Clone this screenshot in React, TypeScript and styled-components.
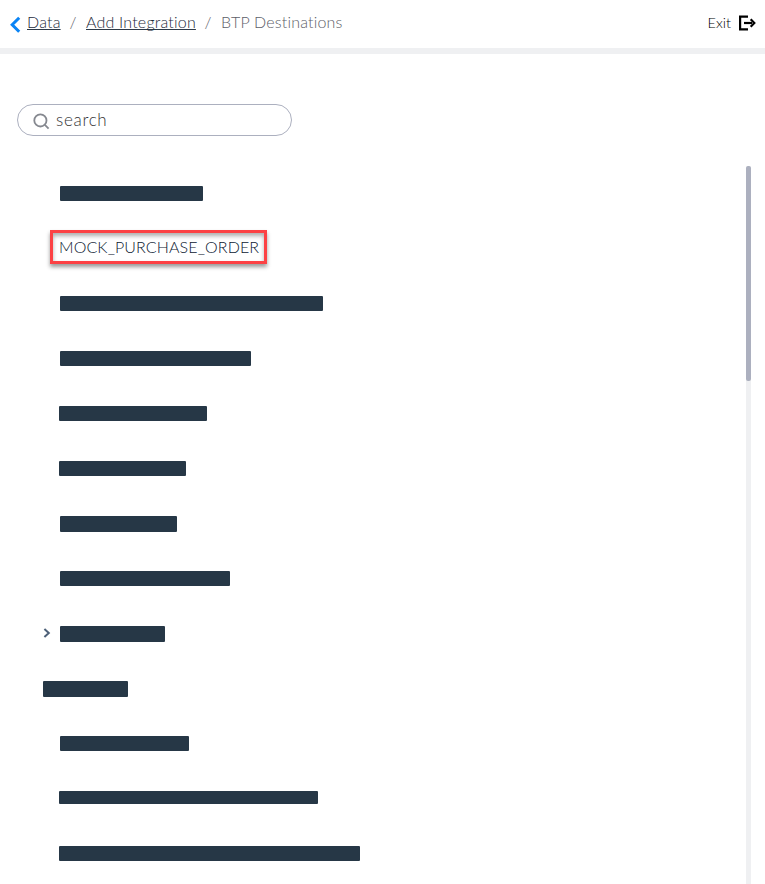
import React from "react";
import styled, { createGlobalStyle } from "styled-components";

const GlobalStyle = createGlobalStyle`
  * { box-sizing: border-box; }
  body {
    margin: 0;
    background: #fff;
    overflow: hidden;
    font-family: Lato, "Open Sans", sans-serif;
    font-weight: 300;
  }
`;

const Page = styled.div`
  height: 884px;
  display: flex;
  flex-direction: column;
  overflow: hidden;
`;

const Header = styled.header`
  height: 54px;
  flex: none;
  display: flex;
  justify-content: space-between;
  padding: 12px 9px 0 9px;
  border-bottom: 6px solid #eff0f2;
`;

const Breadcrumbs = styled.nav`
  display: flex;
  font-size: 16px;
  line-height: 20px;
  color: #5c5e68;
  white-space: nowrap;
`;

const BackIcon = styled.svg`
  width: 12px;
  height: 17px;
  margin: 4px 6px 0 0;
`;

const Crumb = styled.a<{ $width: number; $spacing: number }>`
  width: ${(p) => p.$width}px;
  letter-spacing: ${(p) => p.$spacing}px;
  color: #1c2a3a;
  text-decoration: underline 1px;
  text-decoration-color: #2d3a48;
  text-decoration-skip-ink: none;
  text-underline-offset: 1px;
`;

const Slash = styled.span`
  width: 26px;
  text-align: center;
`;

const Current = styled.span`
  letter-spacing: 0.2px;
`;

const ExitButton = styled.button`
  display: flex;
  gap: 7px;
  height: 22px;
  padding: 0;
  border: 0;
  background: none;
  font: inherit;
  font-size: 14.5px;
  line-height: 22px;
  color: #000;
`;

const ExitIcon = styled.svg`
  width: 18px;
  height: 16px;
  margin-top: 3px;
`;

const SearchBox = styled.label`
  flex: none;
  display: flex;
  align-items: center;
  width: 275px;
  height: 32px;
  margin: 50px 0 30px 17px;
  padding-left: 15px;
  border: 1px solid #acb0bf;
  border-radius: 16px;
`;

const SearchIcon = styled.svg`
  width: 17px;
  height: 17px;
  margin: 2px 6px 0 0;
`;

const SearchInput = styled.input`
  width: 200px;
  margin-top: -1px;
  padding: 0;
  border: 0;
  outline: 0;
  background: none;
  font: inherit;
  font-size: 17px;
  letter-spacing: 0.7px;
  &::placeholder { color: #333; opacity: 1; }
`;

const Content = styled.main`
  flex: 1;
  min-height: 0;
  display: flex;
  justify-content: space-between;
  padding-right: 14px;
`;

const List = styled.ul`
  margin: 0;
  padding: 0;
  list-style: none;
`;

const Row = styled.li<{ $indent: number }>`
  display: flex;
  height: 55px;
  padding: 20px 0 0 ${(p) => p.$indent}px;
`;

const Bar = styled.div<{ $width: number; $height: number }>`
  width: ${(p) => p.$width}px;
  height: ${(p) => p.$height}px;
  border-radius: 1px;
  background: #263746;
`;

const Chevron = styled.svg`
  width: 8px;
  height: 12px;
  margin: 1px 9px 0 0;
`;

const Highlight = styled.div`
  width: 217px;
  height: 34px;
  margin-top: -11px;
  padding-left: 6px;
  border: 3px solid #fc4144;
  box-shadow: 0 3px 4px rgba(0, 0, 0, 0.4), inset 0 3px 4px rgba(0, 0, 0, 0.32);
  font-size: 16px;
  line-height: 27px;
  letter-spacing: 0.12px;
  white-space: nowrap;
  color: #0c2032;
`;

const Track = styled.div`
  width: 5px;
  background: #eff0f2;
  border-radius: 3px 3px 0 0;
`;

const Thumb = styled.div`
  height: 215px;
  border-radius: 2px;
  background: #acb0bf;
`;

type Item = { indent: number; width?: number; height?: number; label?: string; expandable?: boolean };

const items: Item[] = [
  { indent: 60, width: 143 },
  { indent: 50, label: "MOCK_PURCHASE_ORDER" },
  { indent: 60, width: 263 },
  { indent: 60, width: 191 },
  { indent: 59, width: 148 },
  { indent: 59, width: 127 },
  { indent: 60, width: 117, height: 16 },
  { indent: 60, width: 170 },
  { indent: 43, width: 105, height: 16, expandable: true },
  { indent: 43, width: 85, height: 16 },
  { indent: 60, width: 129 },
  { indent: 59, width: 259, height: 13 },
  { indent: 59, width: 301 },
];

export default function App() {
  return (
    <Page>
      <GlobalStyle />
      <Header>
        <Breadcrumbs>
          <BackIcon viewBox="0 0 12 17" fill="none" stroke="#0a84f5" strokeWidth="3">
            <path d="M10.2 1.8 L3.2 8.8 L10.2 15.8" />
          </BackIcon>
          <Crumb $width={33} $spacing={0.2}>Data</Crumb>
          <Slash>/</Slash>
          <Crumb $width={109} $spacing={0.2}>Add Integration</Crumb>
          <Slash>/</Slash>
          <Current>BTP Destinations</Current>
        </Breadcrumbs>
        <ExitButton>
          Exit
          <ExitIcon viewBox="0 0 18 16" fill="none" stroke="#000" strokeWidth="2.2">
            <path d="M10 1.6 H2.1 V14.4 H10" />
            <path d="M6 8 H14" />
            <path d="M12.7 4.3 L16.3 8 L12.7 11.7" />
          </ExitIcon>
        </ExitButton>
      </Header>
      <SearchBox>
        <SearchIcon viewBox="0 0 17 17" fill="none" stroke="#85888f" strokeWidth="1.8">
          <circle cx="7.4" cy="7.4" r="6.1" />
          <path d="M11.9 11.9 L15.6 15.6" />
        </SearchIcon>
        <SearchInput placeholder="search" />
      </SearchBox>
      <Content>
        <List>
          {items.map((item, i) => (
            <Row key={i} $indent={item.indent}>
              {item.expandable && (
                <Chevron viewBox="0 0 8 12" fill="none" stroke="#4d6078" strokeWidth="2">
                  <path d="M1.4 2 L5.8 6 L1.4 10" />
                </Chevron>
              )}
              {item.label ? (
                <Highlight>{item.label}</Highlight>
              ) : (
                <Bar $width={item.width ?? 0} $height={item.height ?? 15} />
              )}
            </Row>
          ))}
        </List>
        <Track>
          <Thumb />
        </Track>
      </Content>
    </Page>
  );
}
